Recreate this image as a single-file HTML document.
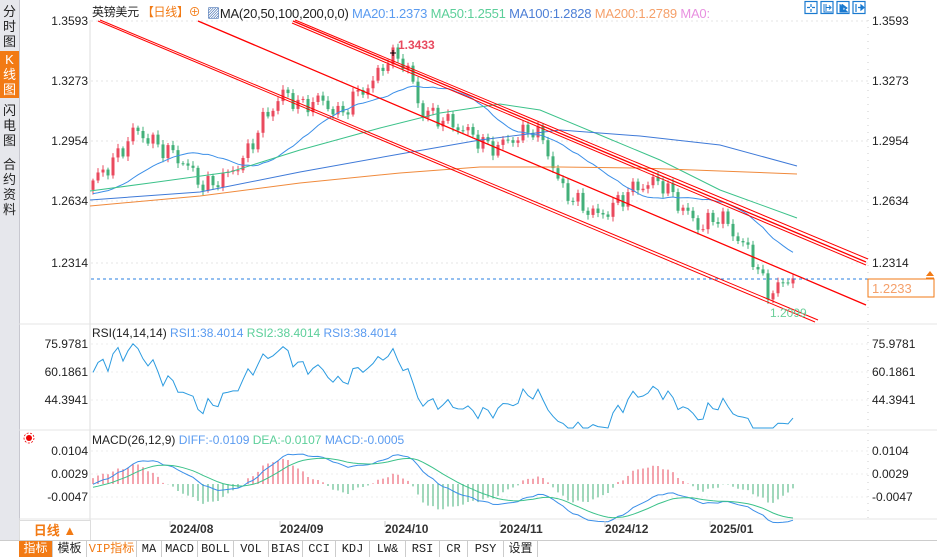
<!DOCTYPE html>
<html><head><meta charset="utf-8"><style>
body{margin:0;width:937px;height:557px;overflow:hidden;background:#fff;font-family:"Liberation Sans","Noto Sans CJK SC",sans-serif;position:relative}
.abs{position:absolute}
.side{left:0;top:0;width:19px;height:541px;background:#e6e7ec;border-right:1px solid #c8c8d0}
.tab{position:absolute;left:0;width:19px;font-size:13px;line-height:15px;text-align:center;color:#222}
.lbl{position:absolute;font-size:12px;color:#222;white-space:nowrap}
.tb{position:absolute;top:541px;height:16px;font-size:12px;line-height:16px;text-align:center;border-right:1px solid #ccc;font-family:"Liberation Mono","Noto Sans CJK SC",monospace;color:#222;background:#fff}
</style></head><body>
<div class="abs side"></div>
<div class="tab" style="top:4px">分<br>时<br>图</div>
<div class="tab" style="top:51px;height:46px;background:#f27a14;color:#fff;padding-top:1px">K<br>线<br>图</div>
<div class="tab" style="top:103px">闪<br>电<br>图</div>
<div class="tab" style="top:157px">合<br>约<br>资<br>料</div>
<svg class="abs" style="left:0;top:0" width="937" height="557" id="s"></svg>
<div class="lbl" style="left:92px;top:3px;font-size:12px;letter-spacing:-0.3px">英镑美元 <span style="color:#f27a14">【日线】</span><span style="color:#f27a14">⊕</span></div>
<div class="lbl" style="left:207px;top:3px;font-size:13px;letter-spacing:-0.2px"><span style="color:#1a4fa0">▨</span>MA(20,50,100,200,0,0) <span style="color:#5a9bf0">MA20:1.2373</span> <span style="color:#5ccf9a">MA50:1.2551</span> <span style="color:#4d7fd6">MA100:1.2828</span> <span style="color:#f5a06a">MA200:1.2789</span> <span style="color:#e890e0">MA0:</span></div>
<div class="lbl" style="left:92px;top:326px">RSI(14,14,14) <span style="color:#5a9bf0">RSI1:38.4014</span> <span style="color:#5ccf9a">RSI2:38.4014</span> <span style="color:#5a9bf0">RSI3:38.4014</span></div>
<div class="lbl" style="left:92px;top:433px">MACD(26,12,9) <span style="color:#5a9bf0">DIFF:-0.0109</span> <span style="color:#5ccf9a">DEA:-0.0107</span> <span style="color:#5a9bf0">MACD:-0.0005</span></div>
<div class="abs" style="left:19px;top:520px;width:70px;height:20px;border:1px solid #ddd;color:#f27a14;font-weight:bold;font-size:13px;line-height:20px;text-align:center">日线 ▲</div>
<div class="tb" style="left:19px;width:33px;background:#f27a14;color:#fff">指标</div>
<div class="tb" style="left:53px;width:33px">模板</div>
<div class="tb" style="left:87px;width:49px;color:#f27a14">VIP指标</div>
<div class="tb" style="left:137px;width:24px">MA</div>
<div class="tb" style="left:162px;width:35px">MACD</div>
<div class="tb" style="left:198px;width:35px">BOLL</div>
<div class="tb" style="left:234px;width:34px">VOL</div>
<div class="tb" style="left:269px;width:33px">BIAS</div>
<div class="tb" style="left:303px;width:32px">CCI</div>
<div class="tb" style="left:336px;width:33px">KDJ</div>
<div class="tb" style="left:370px;width:35px">LW&amp;</div>
<div class="tb" style="left:406px;width:33px">RSI</div>
<div class="tb" style="left:440px;width:27px">CR</div>
<div class="tb" style="left:468px;width:35px">PSY</div>
<div class="tb" style="left:504px;width:33px">设置</div>
<div class="abs" style="left:0;top:540px;width:937px;border-top:1px solid #ccc"></div>
<script>
var S=document.getElementById('s'),h='';
function L(x1,y1,x2,y2,c,w,d){h+='<line x1="'+x1+'" y1="'+y1+'" x2="'+x2+'" y2="'+y2+'" stroke="'+c+'" stroke-width="'+(w||1)+'"'+(d?' stroke-dasharray="'+d+'"':'')+'/>';}
function T(x,y,t,c,a,s){h+='<text x="'+x+'" y="'+y+'" fill="'+(c||'#222')+'" font-size="'+(s||12)+'" font-family="Liberation Sans" text-anchor="'+(a||'start')+'">'+t+'</text>';}
function P(pts,c,w){h+='<polyline fill="none" stroke="'+c+'" stroke-width="'+(w||1)+'" points="'+pts.map(function(p){return p[0].toFixed(1)+','+p[1].toFixed(1)}).join(' ')+'"/>';}
L(90,20,90,520,'#ddd');L(868,20,868,520,'#ccc',1,'1,6');
L(19,324,937,324,'#e4e4e4');L(19,430,937,430,'#e4e4e4');L(19,519,937,519,'#e4e4e4');
var yp=function(p){return 21+(1.3593-p)*1892;};
[[1.3593,21],[1.3273,81],[1.2954,141],[1.2634,201],[1.2314,263]].forEach(function(a){L(91,a[1],868,a[1],'#e4e4e4',1,'2,3');T(88,a[1]+4,a[0].toFixed(4),'#222','end');T(872,a[1]+4,a[0].toFixed(4));});
[['75.9781',344],['60.1861',372],['44.3941',400]].forEach(function(a){L(91,a[1],868,a[1],'#eee',1,'2,3');T(88,a[1]+4,a[0],'#222','end');T(872,a[1]+4,a[0]);});
[['0.0104',451],['0.0029',474],['-0.0047',497]].forEach(function(a){L(91,a[1],868,a[1],'#eee',1,'2,3');T(88,a[1]+4,a[0],'#222','end');T(872,a[1]+4,a[0]);});
var K=[[93,1.275],[100,1.278],[118,1.288],[135,1.302],[150,1.296],[170,1.290],[185,1.284],[205,1.271],[230,1.279],[245,1.287],[262,1.306],[285,1.322],[300,1.314],[320,1.318],[340,1.309],[355,1.320],[372,1.326],[385,1.338],[398,1.341],[410,1.332],[420,1.312],[440,1.308],[470,1.300],[490,1.292],[510,1.296],[535,1.303],[548,1.290],[560,1.272],[580,1.262],[600,1.256],[615,1.262],[630,1.270],[660,1.275],[680,1.262],[700,1.250],[720,1.257],[735,1.246],[748,1.238],[758,1.229],[767,1.214],[775,1.219],[785,1.220],[797,1.2233]];
function interp(x){for(var i=0;i<K.length-1;i++){if(x<=K[i+1][0]){var t=(x-K[i][0])/(K[i+1][0]-K[i][0]);return K[i][1]+t*(K[i+1][1]-K[i][1]);}}return K[K.length-1][1];}
var cl=[],xs=[];
for(var i=-70;i<0;i++){cl.push(1.272+0.006*Math.sin(i/7)+0.0015*Math.sin(i*2.3));}
var pre=cl.length;
var N=141;
for(var i=0;i<N;i++){var x=93+i*5;xs.push(x);var c=interp(x)+0.0035*Math.sin(i*1.7)+0.002*Math.sin(i*3.9);if(i==N-1)c=1.2233;cl.push(c);}
for(var i=0;i<N;i++){var o=cl[pre+i-1],c=cl[pre+i],x=xs[i];var hi=Math.max(o,c)+0.001+0.0015*Math.abs(Math.sin(i*2.1)),lo=Math.min(o,c)-0.001-0.0015*Math.abs(Math.cos(i*1.3));var col=c>=o?'#ea4a5e':'#43b07a';L(x,yp(hi),x,yp(lo),col);var y1=yp(Math.max(o,c)),y2=yp(Math.min(o,c));h+='<rect x="'+(x-1.5)+'" y="'+y1+'" width="3" height="'+Math.max(1,y2-y1)+'" fill="'+col+'"/>';}
function ma(n){var r=[];for(var i=0;i<N;i++){var s=0;for(var k=0;k<n;k++)s+=cl[Math.max(0,pre+i-k)];r.push([xs[i],yp(s/n)]);}return r;}
P(ma(20),'#3b8fe8');
P([[90,191],[150,183],[230,172],[300,150],[380,128],[440,113],[500,104],[540,110],[600,135],[660,160],[720,190],[797,218]],'#3cc28a');
P([[90,200],[200,192],[300,172],[400,154],[480,140],[560,130],[640,136],[720,145],[797,166]],'#3f7ad8');
P([[90,206],[200,196],[300,183],[400,173],[480,167],[560,167],[640,168],[720,171],[797,174]],'#f08a3c');
L(98,21,815,322,'#f00',1);L(100,20,818,320,'#f00',1);
L(198,21,866,305,'#f00',1.3);
L(293,21,866,262,'#f00',1.3);L(295,20,868,259,'#f00',1);L(292,23,866,265,'#f00',1);
h+='<text x="398" y="49" font-size="12" font-weight="bold" fill="#e84a5f" font-family="Liberation Sans">1.3433</text>';
L(390,53,396,53,'#000');L(393,50,393,56,'#000');
T(770,317,'1.2099','#6ccf9a');
L(91,279,868,279,'#2a7fe0',1,'3,3');
h+='<rect x="868" y="279" width="66" height="18" fill="#fff" stroke="#f27a14"/>';T(872,293,'1.2233','#f5a06a','start',13);
h+='<path d="M926,276 L930,271 L934,276Z" fill="#f27a14"/>';L(926,278,934,278,'#f27a14');
// toolbar icons
var ic=[805,821,837,853];
ic.forEach(function(x){h+='<rect x="'+x+'" y="1.5" width="12" height="12" fill="#fff" stroke="#1a7ad0" stroke-width="1.2"/>';});
h+='<path d="M811,4v3M811,9v3M807,7.5h3M812,7.5h3" stroke="#1a7ad0" stroke-width="1.2"/>';
h+='<path d="M824,4v8h8M826,4v7M826,7.5h4M829,5.5l2,2l-2,2" stroke="#1a7ad0" stroke-width="1" fill="none"/>';
h+='<path d="M840,4v8h8M842,4v7M843,5l4,3l-4,3z" stroke="#1a7ad0" stroke-width="1" fill="#1a7ad0"/>';
h+='<path d="M856,4v8M858,7.5h3M861,5l3,2.5l-3,2.5z" stroke="#1a7ad0" stroke-width="1.2" fill="#1a7ad0"/>';
var rs=[],ag=0,al=0;
for(var i=1;i<cl.length;i++){var d=cl[i]-cl[i-1];var g=Math.max(d,0),l=Math.max(-d,0);ag=(ag*13+g)/14;al=(al*13+l)/14;var r=al==0?100:100-100/(1+ag/al);if(i>=pre)rs.push([xs[i-pre],344+(75.9781-r)*1.773]);}
rs=rs.map(function(p){return [p[0],Math.max(337,Math.min(428,p[1]))];});
P(rs,'#2b9be0');
var e12=cl[0],e26=cl[0],dea=0,dp=[],dep=[];
function my(v){return 484-v*3066;}
for(var i=0;i<cl.length;i++){e12=e12+(cl[i]-e12)*2/13;e26=e26+(cl[i]-e26)*2/27;var dif=e12-e26;dea=dea+(dif-dea)*0.2;if(i>=pre){var x=xs[i-pre];dp.push([x,my(dif)]);dep.push([x,my(dea)]);var m=2*(dif-dea);L(x,484,x,my(m),m>=0?'#ea4a5e':'#43b07a');}}
P(dp,'#3b8fe8');P(dep,'#3cc28a');
h+='<circle cx="29" cy="438" r="3" fill="#e00"/><circle cx="29" cy="438" r="5" fill="none" stroke="#e00" stroke-width="0.8" stroke-dasharray="2,1.5"/>';
[['2024/08',195],['2024/09',305],['2024/10',410],['2024/11',525],['2024/12',630],['2025/01',735]].forEach(function(a){L(a[1]-25,521,a[1]-25,527,'#ccc');h+='<text x="'+(a[1]-25)+'" y="533" font-size="12" font-weight="bold" fill="#333" font-family="Liberation Sans">'+a[0]+'</text>';});
S.innerHTML=h;
</script>
</body></html>
